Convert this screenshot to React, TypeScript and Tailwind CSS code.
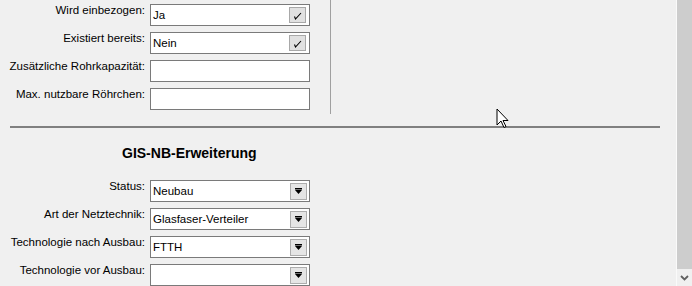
import { Fragment } from "react";

const topRows = [
  { label: "Wird einbezogen:", value: "Ja", kind: "check" },
  { label: "Existiert bereits:", value: "Nein", kind: "check" },
  { label: "Zusätzliche Rohrkapazität:", value: "", kind: "text" },
  { label: "Max. nutzbare Röhrchen:", value: "", kind: "text" },
];

const gisRows = [
  { label: "Status:", value: "Neubau" },
  { label: "Art der Netztechnik:", value: "Glasfaser-Verteiler" },
  { label: "Technologie nach Ausbau:", value: "FTTH" },
  { label: "Technologie vor Ausbau:", value: "" },
];

function CheckButton() {
  return (
    <div className="mr-[3px] flex h-[16px] w-[17px] items-center justify-center border border-[#a8a8a8] bg-[#e1e1e1]">
      <svg width="11" height="11" viewBox="0 0 11 11">
        <path d="M2.5 6.5 L3.5 9 L9 3" fill="none" stroke="#000" strokeWidth="1.1" />
      </svg>
    </div>
  );
}

function DropButton() {
  return (
    <div className="mr-[2px] flex h-[17px] w-[17px] items-center justify-center border border-[#adadad] bg-[#e5e5e5]">
      <svg width="9" height="7" viewBox="0 0 9 7">
        <rect x="1" y="0" width="7" height="1.5" fill="#000" />
        <path d="M1 2 L8 2 L4.5 6 Z" fill="#000" />
      </svg>
    </div>
  );
}

function Field({ value, children }: { value: string; children?: React.ReactNode }) {
  return (
    <div className="ml-[5px] flex h-[22px] w-[160px] items-center border border-[#7a7a7a] bg-white pl-[2px]">
      <span className="flex-1 whitespace-nowrap text-[11.5px] leading-[14px]">{value}</span>
      {children}
    </div>
  );
}

function Row({ label, children }: { label: string; children: React.ReactNode }) {
  return (
    <div className="flex items-start">
      <span className="w-[145px] shrink-0 whitespace-nowrap text-right text-[11.5px] leading-[12px]">{label}</span>
      {children}
    </div>
  );
}

function Cursor() {
  return (
    <svg className="absolute left-[496px] top-[108px]" width="13" height="21" viewBox="0 0 13 21">
      <path d="M1 1 L1 17 L5 13 L8 19.5 L10 18.5 L7 12.5 L12 12.5 Z" fill="#fff" stroke="#000" strokeWidth="1" strokeLinejoin="miter" />
    </svg>
  );
}

export default function App() {
  return (
    <div className="relative flex h-[286px] w-[692px] overflow-hidden bg-[#f0f0f0] font-['Liberation_Sans',Arial,sans-serif] text-black">
      <div className="relative flex-1">
        <div className="flex h-[114px] w-[331px] flex-col gap-[6px] border-r border-[#a0a0a0] pt-[4px]">
          {topRows.map((r) => (
            <Row key={r.label} label={r.label}>
              <Field value={r.value}>{r.kind === "check" && <CheckButton />}</Field>
            </Row>
          ))}
        </div>

        <div className="ml-[10px] mt-[12px] h-[2px] w-[650px] bg-[#808080]" />

        <h2 className="ml-[122px] mt-[17px] whitespace-nowrap text-[14px] font-bold leading-[16px]">GIS-NB-Erweiterung</h2>

        <div className="mt-[19px] flex flex-col gap-[6px]">
          {gisRows.map((r) => (
            <Fragment key={r.label}>
              <Row label={r.label}>
                <Field value={r.value}>
                  <DropButton />
                </Field>
              </Row>
            </Fragment>
          ))}
        </div>

        <Cursor />
      </div>

      <div className="flex w-[16px] flex-col border-l border-[#fafafa]">
        <div className="flex-1 bg-[#cdcdcd]" />
        <div className="flex h-[17px] items-center justify-center bg-[#f0f0f0]">
          <svg width="9" height="6" viewBox="0 0 9 6">
            <path d="M1 1 L4.5 4.5 L8 1" fill="none" stroke="#606060" strokeWidth="1.8" />
          </svg>
        </div>
      </div>
    </div>
  );
}
